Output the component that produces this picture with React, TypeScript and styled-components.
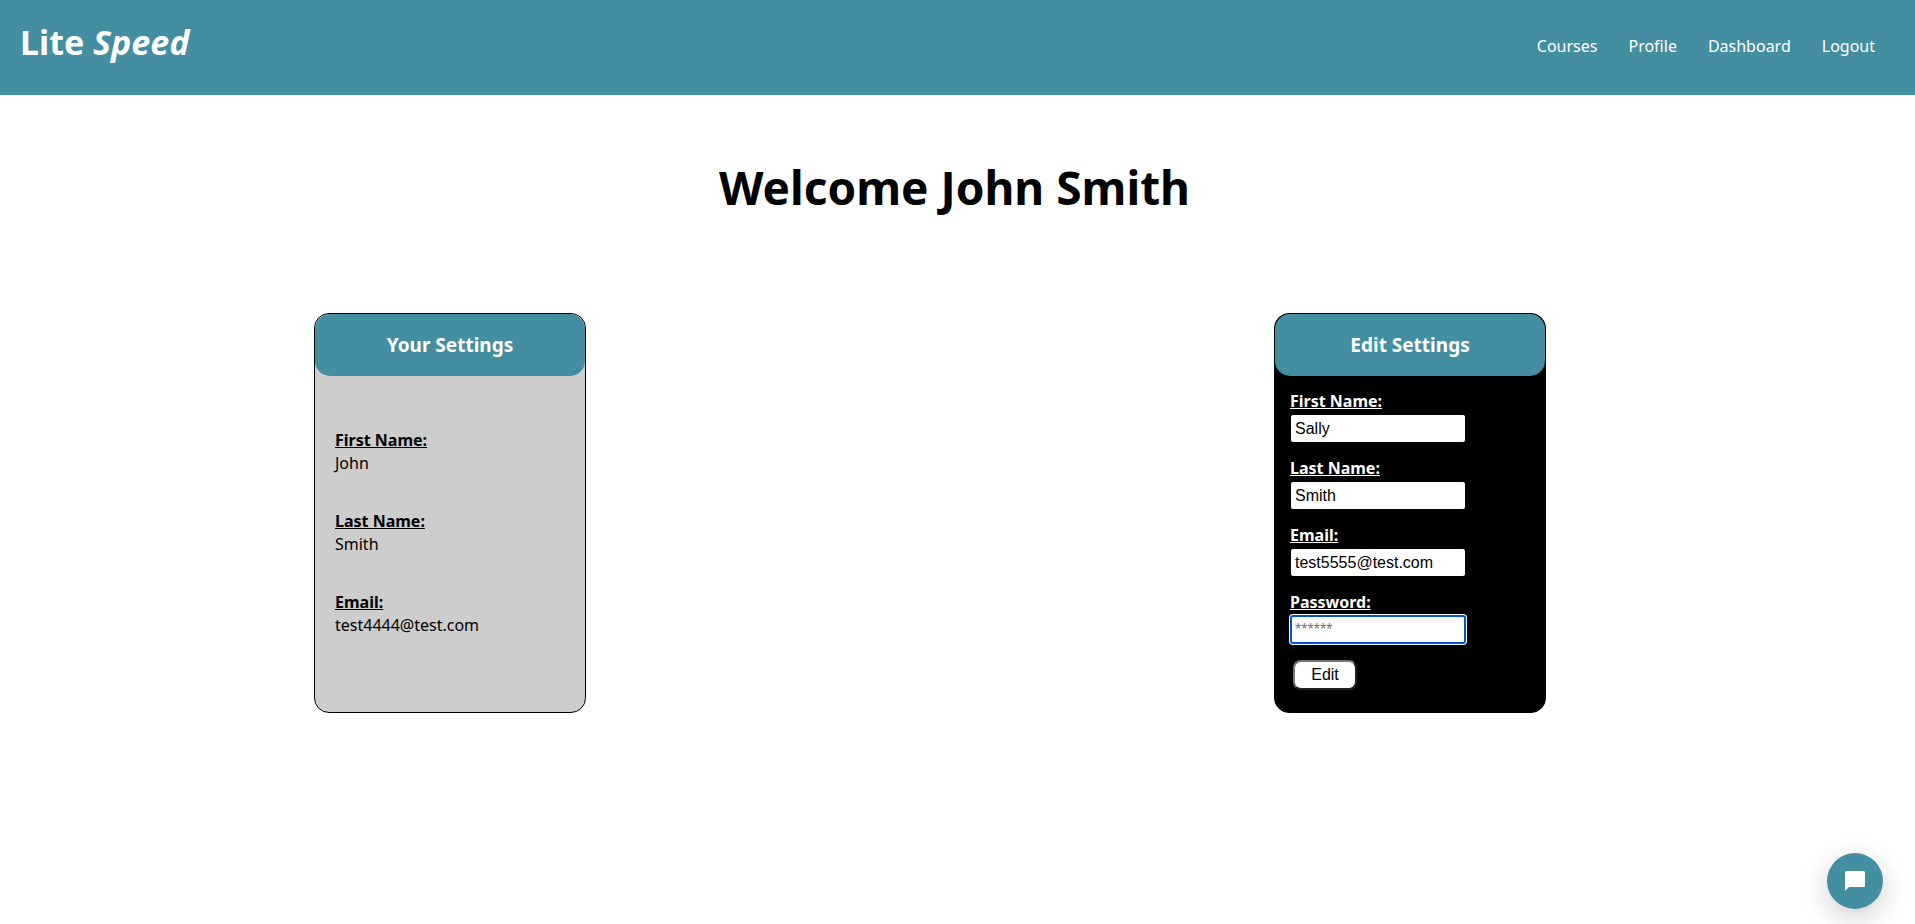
import React from "react";
import styled, { createGlobalStyle, css } from "styled-components";

const teal = "#438ea1";

const GlobalStyle = createGlobalStyle`
  *, *::before, *::after { box-sizing: border-box; }
  body {
    margin: 0;
    background: #fff;
    color: #000;
    font: 16px/24px "Noto Sans", "Open Sans", sans-serif;
  }
`;

const Header = styled.header`
  display: flex;
  justify-content: space-between;
  align-items: flex-start;
  height: 95px;
  padding: 20px 40px 0 20px;
  background: ${teal};
  color: #fff;
`;

const Logo = styled.h1`
  margin: 0;
  font-size: 34px;
  line-height: 44px;
`;

const Nav = styled.nav`
  display: flex;
  gap: 31px;
  padding-top: 14px;
`;

const NavLink = styled.a`
  color: inherit;
  text-decoration: none;
`;

const Welcome = styled.h2`
  margin: 60px 6px 0 0;
  font-size: 46px;
  line-height: 64px;
  text-align: center;
`;

const Panels = styled.main`
  display: grid;
  grid-template-columns: 1fr 1fr;
  column-gap: 5px;
  justify-items: center;
  margin-top: 94px;
`;

const Card = styled.section<{ $dark?: boolean }>`
  width: 272px;
  min-height: 400px;
  margin-right: 55px;
  border: 1px solid #000;
  border-radius: 15px;
  background: ${(p) => (p.$dark ? "#000" : "#cdcdcd")};
  color: ${(p) => (p.$dark ? "#fff" : "#000")};
`;

const CardTitle = styled.h3`
  margin: 0;
  padding: 19px 0;
  border-radius: 15px;
  background: ${teal};
  color: #fff;
  font-size: 19px;
  line-height: 24px;
  text-align: center;
`;

const Details = styled.dl`
  display: grid;
  gap: 35px;
  margin: 0;
  padding: 52px 20px 0;
`;

const labelText = css`
  font-weight: 700;
  text-decoration: underline;
`;

const Term = styled.dt`
  ${labelText}
`;

const Value = styled.dd`
  margin: 0;
  line-height: 22px;
`;

const Form = styled.form`
  display: grid;
  justify-items: start;
  gap: 13px;
  padding: 13px 15px 0;
`;

const Field = styled.div`
  display: grid;
  gap: 1px;
`;

const Label = styled.label`
  ${labelText}
`;

const Input = styled.input<{ $active?: boolean }>`
  width: 176px;
  height: 29px;
  padding: 0 4px;
  border: 1px solid #000;
  border-radius: 3px;
  background: #fff;
  color: #000;
  font: 16px "Liberation Sans", Arial, sans-serif;
  outline: none;

  &::placeholder {
    color: #757575;
  }

  ${(p) =>
    p.$active &&
    css`
      border: 2px solid #0056c7;
      padding: 0 3px;
      box-shadow: 0 0 0 1px #fff;
    `}
`;

const EditButton = styled.button`
  width: 64px;
  height: 30px;
  margin: 3px 0 0 3px;
  padding: 0;
  border: 2px outset #767676;
  border-radius: 8px;
  background: #fff;
  color: #000;
  font: 16px "Liberation Sans", Arial, sans-serif;
`;

const ChatButton = styled.button`
  position: fixed;
  right: 32px;
  bottom: 15px;
  display: grid;
  place-items: center;
  width: 56px;
  height: 56px;
  padding: 0;
  border: 0;
  border-radius: 50%;
  background: ${teal};
  box-shadow: 0 8px 28px rgba(0, 0, 0, 0.2);
`;

const links = ["Courses", "Profile", "Dashboard", "Logout"];

const details = [
  ["First Name:", "John"],
  ["Last Name:", "Smith"],
  ["Email:", "test4444@test.com"],
];

const fields = [
  { id: "first-name", label: "First Name:", type: "text", value: "Sally" },
  { id: "last-name", label: "Last Name:", type: "text", value: "Smith" },
  { id: "email", label: "Email:", type: "email", value: "test5555@test.com" },
];

export default function App() {
  return (
    <>
      <GlobalStyle />
      <Header>
        <Logo>
          Lite <em>Speed</em>
        </Logo>
        <Nav>
          {links.map((name) => (
            <NavLink key={name} href="#">
              {name}
            </NavLink>
          ))}
        </Nav>
      </Header>
      <Welcome>Welcome John Smith</Welcome>
      <Panels>
        <Card>
          <CardTitle>Your Settings</CardTitle>
          <Details>
            {details.map(([term, value]) => (
              <div key={term}>
                <Term>{term}</Term>
                <Value>{value}</Value>
              </div>
            ))}
          </Details>
        </Card>
        <Card $dark>
          <CardTitle>Edit Settings</CardTitle>
          <Form onSubmit={(e) => e.preventDefault()}>
            {fields.map((f) => (
              <Field key={f.id}>
                <Label htmlFor={f.id}>{f.label}</Label>
                <Input id={f.id} type={f.type} defaultValue={f.value} />
              </Field>
            ))}
            <Field>
              <Label htmlFor="password">Password:</Label>
              <Input id="password" type="password" placeholder="******" $active />
            </Field>
            <EditButton type="submit">Edit</EditButton>
          </Form>
        </Card>
      </Panels>
      <ChatButton type="button" aria-label="Open chat">
        <svg width="20" height="20" viewBox="0 0 20 20" fill="#fff" aria-hidden="true">
          <path d="M1.5 0H18.5Q20 0 20 1.5V14.5Q20 16 18.5 16H4L0 20V1.5Q0 0 1.5 0Z" />
        </svg>
      </ChatButton>
    </>
  );
}
